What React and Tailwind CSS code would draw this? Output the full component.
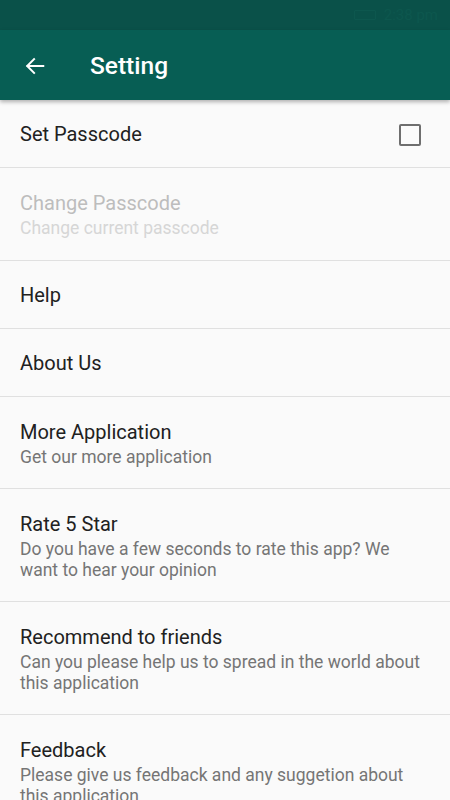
import React from "react";

const items = [
  { title: "Set Passcode", checkbox: true },
  { title: "Change Passcode", sub: "Change current passcode", disabled: true },
  { title: "Help" },
  { title: "About Us" },
  { title: "More Application", sub: "Get our more application" },
  { title: "Rate 5 Star", sub: "Do you have a few seconds to rate this app? We want to hear your opinion" },
  { title: "Recommend to friends", sub: "Can you please help us to spread in the world about this application" },
  { title: "Feedback", sub: "Please give us feedback and any suggetion about this application" },
];

function Row({ item }) {
  if (!item.sub) {
    return (
      <div className="flex items-center justify-between border-b border-[#e0e0e0] pl-[20px] pr-[29px] pt-[22px] pb-[20px]">
        <span className="text-[20px] leading-[25px] text-[#212121]">{item.title}</span>
        {item.checkbox && (
          <span className="block w-[22px] h-[22px] border-[2.5px] border-[#6e6e6e] rounded-[2px]" />
        )}
      </div>
    );
  }
  return (
    <div className="flex flex-col border-b border-[#e0e0e0] pl-[20px] pr-[20px] pt-[23px] pb-[21px]">
      <span className={"text-[20px] leading-[25px] " + (item.disabled ? "text-[#bdbdbd]" : "text-[#212121]")}>
        {item.title}
      </span>
      <span className={"text-[17.5px] leading-[20.5px] mt-[2px] " + (item.disabled ? "text-[#d6d6d6]" : "text-[#757575]")}>
        {item.sub}
      </span>
    </div>
  );
}

export default function App() {
  return (
    <div className="w-[450px] h-[800px] overflow-hidden bg-[#fafafa] flex flex-col" style={{ fontFamily: "Roboto, 'Noto Sans', sans-serif" }}>
      <div className="h-[30px] bg-[#0a5149] flex items-center justify-end pr-[12px] gap-[8px] shrink-0">
        <span className="block w-[22px] h-[10px] border border-[#0d574e] rounded-[1px]" />
        <span className="text-[15px] text-[#0d574e]">2:38 pm</span>
      </div>
      <div className="relative z-10 h-[70px] bg-[#075e54] flex items-center shadow-[0_2px_4px_rgba(0,0,0,0.3)] shrink-0">
        <div className="w-[90px] flex items-center pl-[24px] pt-[2px]">
          <svg width="22" height="22" viewBox="0 0 24 24" fill="none" stroke="white" strokeWidth="2.2" strokeLinecap="square">
            <path d="M21 12H4" />
            <path d="M11 4.5L3.5 12L11 19.5" />
          </svg>
        </div>
        <span className="text-white text-[24.5px] font-medium pt-[3px]">Setting</span>
      </div>
      <div className="flex flex-col">
        {items.map((it, i) => (
          <Row key={i} item={it} />
        ))}
      </div>
    </div>
  );
}
